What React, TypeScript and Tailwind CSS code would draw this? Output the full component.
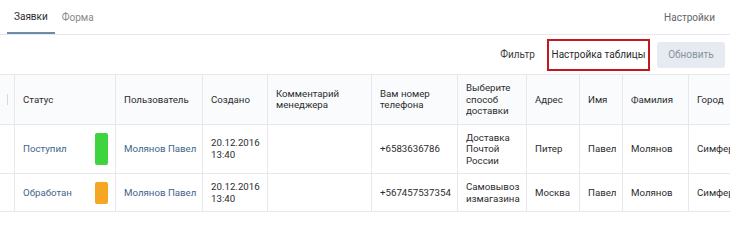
import React from "react";

const cols = [15, 101, 87, 65, 104, 86, 69, 53, 43, 66, 95];

const headers = [
  "Статус",
  "Пользователь",
  "Создано",
  "Комментарий менеджера",
  "Вам номер телефона",
  "Выберите способ доставки",
  "Адрес",
  "Имя",
  "Фамилия",
  "Город",
];

const rows = [
  {
    status: "Поступил",
    color: "bg-[#3fd33f]",
    user: "Молянов Павел",
    created: "20.12.2016 13:40",
    comment: "",
    phone: "+6583636786",
    delivery: "Доставка Почтой России",
    address: "Питер",
    name: "Павел",
    surname: "Молянов",
    city: "Симферополь",
  },
  {
    status: "Обработан",
    color: "bg-[#f5a623]",
    user: "Молянов Павел",
    created: "20.12.2016 13:40",
    comment: "",
    phone: "+567457537354",
    delivery: "Самовывоз измагазина",
    address: "Москва",
    name: "Павел",
    surname: "Молянов",
    city: "Симферополь",
  },
];

const cell = "border border-[#e7e8ec] px-2 py-[7px] align-middle text-left";

function DragHandle() {
  return (
    <svg width="3" height="11" viewBox="0 0 3 11" className="mx-auto">
      <rect x="1" y="0" width="1" height="11" fill="#d3d9de" />
    </svg>
  );
}

export default function App() {
  return (
    <div className="w-[730px] h-[242px] bg-white overflow-hidden font-['Roboto',sans-serif] text-[9.7px] leading-[11.5px] text-[#2c2d2e]">
      {/* Tabs */}
      <div className="flex items-end h-[35px] border-b border-[#e7e8ec]">
        <div className="flex h-full ml-[7px]">
          <button className="px-[7px] h-full border-b-2 border-[#6d8aa9] text-[#2c2d2e] text-[10px] pt-[1px] -mb-px">
            Заявки
          </button>
          <button className="px-[7px] h-full text-[#8a8a8a] text-[10px] pt-[1px]">
            Форма
          </button>
        </div>
        <div className="ml-auto h-full flex items-center pr-[15px] text-[#656565] text-[10px] pt-[1px]">
          Настройки
        </div>
      </div>

      {/* Toolbar */}
      <div className="flex items-center justify-end h-[39px] pr-[5px] text-[10px]">
        <button className="text-[#3d3d3d] mr-[12px]">Фильтр</button>
        <button className="h-[32px] w-[103px] border-2 border-[#c8161d] text-[#2b2b2b]">
          Настройка таблицы
        </button>
        <button className="ml-[7px] h-[26px] w-[68px] rounded-[3px] bg-[#e5ebf1] text-[#8a939e]">
          Обновить
        </button>
      </div>

      {/* Table */}
      <div className="overflow-hidden">
        <table className="table-fixed border-collapse w-[784px] -ml-px">
          <colgroup>
            {cols.map((w, i) => (
              <col key={i} style={{ width: w }} />
            ))}
          </colgroup>
          <thead>
            <tr className="bg-[#fafbfc] h-[49px]">
              <th className="border border-[#e7e8ec] align-middle">
                <DragHandle />
              </th>
              {headers.map((h) => (
                <th key={h} className={cell + " font-normal"}>
                  {h}
                </th>
              ))}
            </tr>
          </thead>
          <tbody>
            {rows.map((r, i) => (
              <tr key={i} className={i === 0 ? "h-[48px]" : "h-[37px]"}>
                <td className="border border-[#e7e8ec]" />
                <td className="border border-[#e7e8ec] pl-2 pr-[7px] py-[7px] align-middle">
                  <div className="flex items-stretch h-full">
                    <span className="self-center text-[#42648b]">{r.status}</span>
                    <span
                      className={
                        "ml-auto w-[13px] rounded-[2px] " +
                        r.color +
                        (i === 0 ? " h-[32px]" : " h-[22px]")
                      }
                    />
                  </div>
                </td>
                <td className={cell + " text-[#42648b] whitespace-nowrap"}>{r.user}</td>
                <td className={cell}>{r.created}</td>
                <td className={cell}>{r.comment}</td>
                <td className={cell}>{r.phone}</td>
                <td className={cell}>{r.delivery}</td>
                <td className={cell}>{r.address}</td>
                <td className={cell}>{r.name}</td>
                <td className={cell}>{r.surname}</td>
                <td className={cell + " whitespace-nowrap"}>{r.city}</td>
              </tr>
            ))}
          </tbody>
        </table>
      </div>
    </div>
  );
}
